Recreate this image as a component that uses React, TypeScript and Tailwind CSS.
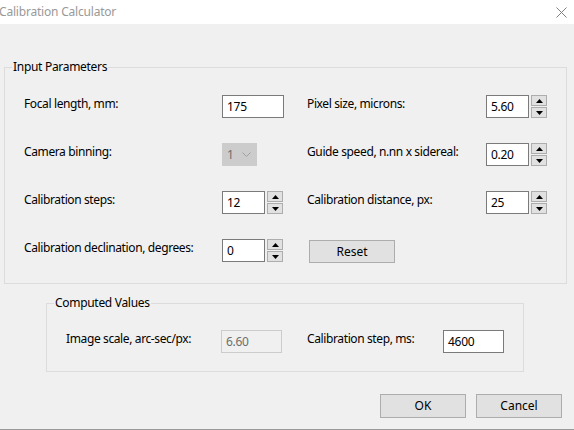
import React from "react";

const font = { fontFamily: "'Segoe UI', 'Noto Sans', sans-serif" };

function Spinner() {
  return (
    <div className="ml-[2px] flex w-[16px] flex-col gap-[1px]">
      <div className="flex h-[11px] items-center justify-center border border-[#adadad] bg-[#e1e1e1]">
        <svg width="7" height="4" viewBox="0 0 7 4"><path d="M0 4 L3.5 0 L7 4 Z" fill="#000" /></svg>
      </div>
      <div className="flex h-[11px] items-center justify-center border border-[#adadad] bg-[#e1e1e1]">
        <svg width="7" height="4" viewBox="0 0 7 4"><path d="M0 0 L3.5 4 L7 0 Z" fill="#000" /></svg>
      </div>
    </div>
  );
}

function TextBox({ value, w, disabled }: { value: string; w: string; disabled?: boolean }) {
  return (
    <div
      className={
        disabled
          ? `${w} flex h-[23px] items-center border border-[#cccccc] bg-[#f0f0f0] pl-[4px] text-[12px] tracking-[-0.3px] text-[#6d6d6d]`
          : `${w} flex h-[23px] items-center border border-[#7a7a7a] bg-white pl-[4px] text-[12px] tracking-[-0.3px] text-black`
      }
    >
      {value}
    </div>
  );
}

function NumBox({ value }: { value: string }) {
  return (
    <div className="flex h-[23px]">
      <TextBox value={value} w="w-[43px]" />
      <Spinner />
    </div>
  );
}

function Label({ children }: { children: React.ReactNode }) {
  return (
    <div className="self-start whitespace-nowrap pt-[1px] text-[12px] leading-[16px] tracking-[-0.38px] text-black">
      {children}
    </div>
  );
}

export default function App() {
  return (
    <div className="h-[430px] w-[574px] overflow-hidden bg-[#f0f0f0]" style={font}>
      <div className="flex h-[24px] items-center justify-between bg-white">
        <span className="ml-[-1px] text-[12px] tracking-[-0.2px] text-[#999999]">Calibration Calculator</span>
        <svg className="mr-[7px]" width="11" height="11" viewBox="0 0 11 11">
          <path d="M0.5 0.5 L10.5 10.5 M10.5 0.5 L0.5 10.5" stroke="#808080" strokeWidth="1" />
        </svg>
      </div>
      <div className="h-[405px] pt-[35px]">
        <fieldset className="ml-[4px] w-[563px] border border-[#dcdcdc] px-0 pb-[20px] pt-[20px]">
          <legend className="ml-[7px] px-[1px] text-[12px] leading-[16px] tracking-[-0.3px] text-black">Input Parameters</legend>
          <div className="grid grid-cols-[198px_85px_179px_auto] gap-y-[25px] pl-[19px]">
            <Label>Focal length, mm:</Label>
            <TextBox value="175" w="w-[62px]" />
            <Label>Pixel size, microns:</Label>
            <NumBox value="5.60" />

            <Label>Camera binning:</Label>
            <div className="flex h-[23px] w-[35px] items-center justify-between border border-[#cccccc] bg-[#cccccc] pl-[4px] pr-[5px] text-[12px] text-[#6d6d6d]">
              <span>1</span>
              <svg width="9" height="5" viewBox="0 0 9 5"><path d="M0.5 0.5 L4.5 4.5 L8.5 0.5" stroke="#a0a0a0" fill="none" strokeWidth="1" /></svg>
            </div>
            <Label>Guide speed, n.nn x sidereal:</Label>
            <NumBox value="0.20" />

            <Label>Calibration steps:</Label>
            <NumBox value="12" />
            <Label>Calibration distance, px:</Label>
            <NumBox value="25" />

            <Label>Calibration declination, degrees:</Label>
            <NumBox value="0" />
            <div className="ml-[2px] mt-[1px] flex h-[23px] w-[86px] items-center justify-center border border-[#adadad] bg-[#e1e1e1] text-[12px] text-black">
              Reset
            </div>
            <div />
          </div>
        </fieldset>

        <fieldset className="ml-[46px] mt-[11px] w-[478px] border border-[#dcdcdc] px-0 pb-[18px] pt-[19px]">
          <legend className="ml-[7px] px-[1px] text-[12px] leading-[16px] tracking-[-0.3px] text-black">Computed Values</legend>
          <div className="flex pl-[19px]">
            <div className="w-[155px]"><Label>Image scale, arc-sec/px:</Label></div>
            <TextBox value="6.60" w="w-[61px]" disabled />
            <div className="ml-[25px] w-[136px]"><Label>Calibration step, ms:</Label></div>
            <TextBox value="4600" w="w-[61px]" />
          </div>
        </fieldset>

        <div className="mt-[22px] flex justify-end gap-[10px] pr-[12px]">
          <div className="flex h-[24px] w-[86px] items-center justify-center border border-[#adadad] bg-[#e1e1e1] text-[12px] text-black">OK</div>
          <div className="flex h-[24px] w-[86px] items-center justify-center border border-[#adadad] bg-[#e1e1e1] text-[12px] text-black">Cancel</div>
        </div>
      </div>
      <div className="h-[1px] bg-[#9a9a9a]" />
    </div>
  );
}
